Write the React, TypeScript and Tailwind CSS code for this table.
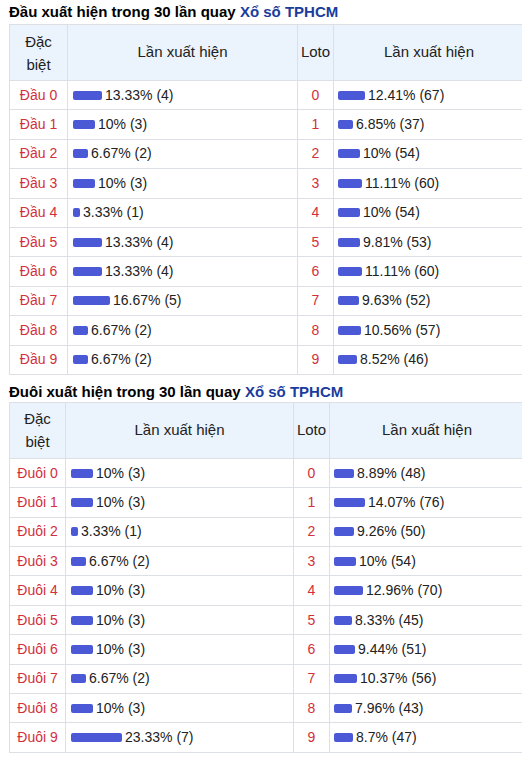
const DAU = [
  { label: "Đầu 0", pct: "13.33", n: 4, loto: "0", lpct: "12.41", ln: 67 },
  { label: "Đầu 1", pct: "10", n: 3, loto: "1", lpct: "6.85", ln: 37 },
  { label: "Đầu 2", pct: "6.67", n: 2, loto: "2", lpct: "10", ln: 54 },
  { label: "Đầu 3", pct: "10", n: 3, loto: "3", lpct: "11.11", ln: 60 },
  { label: "Đầu 4", pct: "3.33", n: 1, loto: "4", lpct: "10", ln: 54 },
  { label: "Đầu 5", pct: "13.33", n: 4, loto: "5", lpct: "9.81", ln: 53 },
  { label: "Đầu 6", pct: "13.33", n: 4, loto: "6", lpct: "11.11", ln: 60 },
  { label: "Đầu 7", pct: "16.67", n: 5, loto: "7", lpct: "9.63", ln: 52 },
  { label: "Đầu 8", pct: "6.67", n: 2, loto: "8", lpct: "10.56", ln: 57 },
  { label: "Đầu 9", pct: "6.67", n: 2, loto: "9", lpct: "8.52", ln: 46 },
];

const DUOI = [
  { label: "Đuôi 0", pct: "10", n: 3, loto: "0", lpct: "8.89", ln: 48 },
  { label: "Đuôi 1", pct: "10", n: 3, loto: "1", lpct: "14.07", ln: 76 },
  { label: "Đuôi 2", pct: "3.33", n: 1, loto: "2", lpct: "9.26", ln: 50 },
  { label: "Đuôi 3", pct: "6.67", n: 2, loto: "3", lpct: "10", ln: 54 },
  { label: "Đuôi 4", pct: "10", n: 3, loto: "4", lpct: "12.96", ln: 70 },
  { label: "Đuôi 5", pct: "10", n: 3, loto: "5", lpct: "8.33", ln: 45 },
  { label: "Đuôi 6", pct: "10", n: 3, loto: "6", lpct: "9.44", ln: 51 },
  { label: "Đuôi 7", pct: "6.67", n: 2, loto: "7", lpct: "10.37", ln: 56 },
  { label: "Đuôi 8", pct: "10", n: 3, loto: "8", lpct: "7.96", ln: 43 },
  { label: "Đuôi 9", pct: "23.33", n: 7, loto: "9", lpct: "8.7", ln: 47 },
];

type Row = (typeof DAU)[number];

const Bar = ({ pct, n }: { pct: string; n: number }) => (
  <div className="flex items-center gap-[3px]">
    <span
      className="inline-block h-[9px] rounded-[2px] bg-[#4b59d6]"
      style={{ width: Math.round(parseFloat(pct) * 2.2) }}
    />
    <span>
      {pct}% ({n})
    </span>
  </div>
);

function StatTable({
  title,
  rows,
  cols,
  titleClass,
}: {
  title: string;
  rows: Row[];
  cols: number[];
  titleClass: string;
}) {
  return (
    <div>
      <div className={`pl-[9px] text-[15px] font-bold leading-[20px] text-black ${titleClass}`}>
        {title} <span className="text-[#1a3c9c]">Xổ số TPHCM</span>
      </div>
      <table className="ml-[9px] w-[515px] table-fixed border-collapse text-[14px] text-[#222]">
        <colgroup>
          {cols.map((w, i) => (
            <col key={i} style={{ width: w }} />
          ))}
        </colgroup>
        <thead>
          <tr className="h-[56px] bg-[#ebf3fc] text-[15px]">
            <th className="border border-[#dcdfe3] px-1 font-normal leading-[23px]">
              Đặc
              <br />
              biệt
            </th>
            <th className="border border-[#dcdfe3] font-normal">Lần xuất hiện</th>
            <th className="border border-[#dcdfe3] font-normal">Loto</th>
            <th className="border border-[#dcdfe3] font-normal">Lần xuất hiện</th>
          </tr>
        </thead>
        <tbody>
          {rows.map((r) => (
            <tr key={r.label} className="h-[29.4px]">
              <td className="border border-[#dcdfe3] text-center text-[#d3303b]">{r.label}</td>
              <td className="border border-[#dcdfe3] pl-[5px]">
                <Bar pct={r.pct} n={r.n} />
              </td>
              <td className="border border-[#dcdfe3] text-center text-[#d3303b]">{r.loto}</td>
              <td className="border border-[#dcdfe3] pl-[4px]">
                <Bar pct={r.lpct} n={r.ln} />
              </td>
            </tr>
          ))}
        </tbody>
      </table>
    </div>
  );
}

export default function App() {
  return (
    <div className="min-h-[763px] bg-white font-['Liberation_Sans',Arial,sans-serif]">
      <StatTable
        title="Đầu xuất hiện trong 30 lần quay"
        rows={DAU}
        cols={[58, 230, 36, 191]}
        titleClass="h-[24px] pt-[2px]"
      />
      <StatTable
        title="Đuôi xuất hiện trong 30 lần quay"
        rows={DUOI}
        cols={[56, 228, 36, 195]}
        titleClass="h-[27px] pt-[7px]"
      />
    </div>
  );
}
